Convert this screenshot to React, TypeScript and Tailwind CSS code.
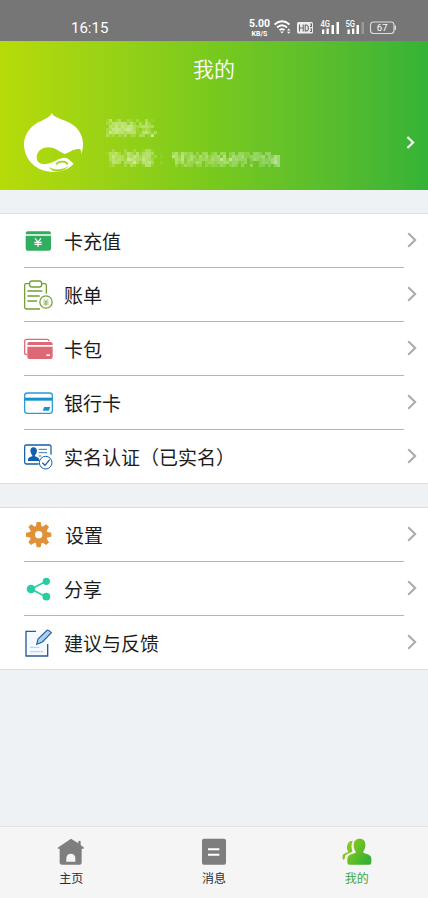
import React from "react";

const FONT = "font-['Noto_Sans_CJK_SC',sans-serif]";

/* Censored lines: each digit is the relative opacity of one 3px block. */
const NAME_MASK = [
  "14013002102003010",
  "22444441420304200",
  "04353545532344330",
  "23555456531023200",
  "25454434441145313",
  "31202130220330160",
];
const CARD_MASK = [
  "0020002002001331000000000000000000000000000000000000000000",
  "1334202431413443000000341432302033023033023033220332033000",
  "0353331435424441201000542522431424233415024334223333413254",
  "0343432654335432000000143513422333243364263433302432323454",
  "0144303336314453001000042413224302332334423312301002332464",
  "0120002032001441000000020132202202122132023203003002202034",
];

function Mosaic({ rows }: { rows: string[] }) {
  return (
    <svg width={rows[0].length * 3} height={18} shapeRendering="crispEdges" className="block">
      {rows.flatMap((row, y) =>
        [...row].map((v, x) =>
          v === "0" ? null : (
            <rect key={`${x}-${y}`} x={x * 3} y={y * 3} width={3} height={3} fill="#fff" fillOpacity={Number(v) / 11} />
          )
        )
      )}
    </svg>
  );
}

function Chevron({ className }: { className: string }) {
  return (
    <svg viewBox="0 0 10 16" fill="none" stroke="currentColor" strokeWidth="2" className={className}>
      <path d="M1.2 1.2 8.2 8 1.2 14.8" />
    </svg>
  );
}

function StatusBar() {
  return (
    <div className="flex h-[41px] items-start bg-[#767676] text-white">
      <span className="ml-[71px] mt-[17px] w-[178px] font-['Roboto',sans-serif] text-[15px] leading-[22px]">16:15</span>
      <div className="mt-[18px] w-[21px] text-center font-['Roboto',sans-serif] font-bold">
        <div className="text-[10.5px] leading-[12px]">5.00</div>
        <div className="text-[7px] leading-[8px]">KB/S</div>
      </div>
      <svg width="150" height="16" viewBox="0 0 150 16" className="ml-[4px] mt-[20px]" fill="none" stroke="#fff">
        <path d="M0.5 4.5Q8-2 15.5 4.5M3 7.5Q8 3 13 7.5M5.5 10.2Q8 8 10.5 10.2" strokeWidth="1.7" />
        <path d="M6.2 11.4h3.6L8 13.6zM13 10.5l1.7-2 1.7 2zM13 11.7l1.7 2 1.7-2z" fill="#fff" stroke="none" />
        <rect x="23" y="2" width="16" height="11.5" rx="1.5" fill="#eee" stroke="none" />
        <path d="M25.5 4.5v7M29.2 4.5v7M25.5 8h3.7M31.2 5v6h1.2q2-.4 2-3t-2-3zM36 4h1.5v2.4H36M36 9h1.5v2.5H36" stroke="#686868" strokeWidth="1.1" />
        <g fill="#fff" stroke="none">
          <path d="M48 9.5h2.3v4.5h-2.3zM52.5 8.5h2.3V14h-2.3zM57.5 5h2.5v9h-2.5zM62.5 2h2.5v12h-2.5zM73.5 9.5h2.3v4.5h-2.3zM78 8.5h2.3V14H78zM82.5 5H85v9h-2.5z" />
          <path d="M87.5 2H90v12h-2.5z" opacity=".25" />
        </g>
        <g fill="#fff" stroke="none" className="font-['Roboto',sans-serif] font-medium">
          <text x="46.5" y="7" fontSize="9" textLength="9.5" lengthAdjust="spacingAndGlyphs">4G</text>
          <text x="71.5" y="7" fontSize="9" textLength="9.5" lengthAdjust="spacingAndGlyphs">5G</text>
        </g>
        <rect x="96.5" y="2" width="23.5" height="11.5" rx="3" strokeWidth="1.1" stroke="#ddd" />
        <path d="M121.3 5.5v4.5" stroke="#ddd" strokeWidth="1.4" />
        <text x="108.2" y="11.2" textAnchor="middle" fontSize="9.5" fill="#fff" stroke="none" className="font-['Roboto',sans-serif] font-normal">67</text>
      </svg>
    </div>
  );
}

function Avatar() {
  return (
    <svg width="59" height="59" viewBox="72 54 177 177" className="ml-[24px] mt-[18px] shrink-0">
      <path
        fill="#fff"
        d="M155 54C161 68 185 71 210 84C236 98 249 122 249 148C249 160 247 171 243 180C245 171 244 163 238 162C224 160 210 171 194 177C178 171 166 157 145 157C124 157 110 171 110 188C110 202 122 208 138 207C160 205 176 188 193 188C204 187 211 198 221 206C205 223 183 231 160 231C110 231 72 195 72 148C72 121 88 97 115 82C135 72 151 66 155 54Z"
      />
      <path d="M169 209C174 198 198 196 203 208" fill="none" stroke="#a2d414" strokeWidth="5" />
      <path d="M149 218C162 227 187 226 202 216C187 232 158 233 149 218Z" fill="#a4d513" stroke="#a4d513" strokeWidth="2" />
    </svg>
  );
}

function RechargeIcon() {
  return (
    <svg width="29" height="28" viewBox="72 51 87 84">
      <path d="M77 71Q77 64 83 64H147Q153 64 153 71V73H77ZM77 77H153V116Q153 122 147 122H83Q77 122 77 116Z" fill="#31ad60" />
      <path d="M105 85 114 96 123 85M103 97H125M103 103H125M114 96V111" fill="none" stroke="#fff" strokeWidth="3.5" />
    </svg>
  );
}

function BillIcon() {
  return (
    <svg width="29" height="30" viewBox="71 209 87 90" fill="none" stroke="#71a032" strokeWidth="3.8">
      <path d="M86 220H76Q73 220 73 225V291Q73 296 77 296H119M124 220H133Q138 220 138 226V250" />
      <rect x="88" y="212" width="36" height="18" rx="7" />
      <path d="M81 242H126M81 257H118M81 272H110" />
      <circle cx="137" cy="275" r="18.5" />
      <path d="M130 266 137 274 144 266M129 275H145M129 281H145M137 274V287" strokeWidth="2.4" />
    </svg>
  );
}

function WalletIcon() {
  return (
    <svg width="29" height="22" viewBox="71 23 87 66">
      <path d="M80 73Q73 73 73 67V33Q73 27 79 27H140Q146 27 146 33" fill="none" stroke="#df6876" strokeWidth="3.8" />
      <path d="M81 44V41Q81 35 87 35H151Q157 35 157 41V44ZM81 49H157V80Q157 86 151 86H87Q81 86 81 80Z" fill="#df6876" />
      <rect x="138" y="72" width="11" height="5" fill="#fff" />
    </svg>
  );
}

function BankCardIcon() {
  return (
    <svg width="29" height="22" viewBox="71 184 87 66">
      <rect x="73" y="187" width="83" height="61" rx="8" fill="#fff" stroke="#2a9bd3" strokeWidth="3.8" />
      <path d="M73 201H156V210H73Z" fill="#1593d0" />
      <path d="M132 229H150L145 240H127Z" fill="#1593d0" />
    </svg>
  );
}

function IdentityIcon() {
  return (
    <svg width="29" height="26" viewBox="71 340 87 78" fill="none" stroke="#175fa9" strokeWidth="3.8">
      <path d="M115 400H78Q73 400 73 395V348Q73 343 78 343H147Q152 343 152 348V372" />
      <path d="M100 350C91 350 89 357 91 365Q93 372 96 374V377Q84 380 83 386V391H117V386Q115 380 104 377V374Q110 367 110 360Q109 351 100 350Z" fill="#1260ad" stroke="none" />
      <path d="M115 356H140M115 366H140M115 376H123" strokeWidth="3" stroke="#3e78b5" />
      <circle cx="136" cy="396" r="19" fill="#fff" strokeWidth="3" />
      <path d="M126 396 134 404 148 387" strokeWidth="4" />
    </svg>
  );
}

function SettingsIcon() {
  return (
    <svg width="26" height="26" viewBox="-38 -38 78 78">
      <g fill="#e1913a">
        <circle r="27" />
        {[0, 45, 90, 135, 180, 225, 270, 315].map((a) => (
          <path key={a} d="M-9-22-6-38H6L9-22Z" transform={`rotate(${a})`} />
        ))}
      </g>
      <circle r="11" fill="#fff" />
    </svg>
  );
}

function ShareIcon() {
  return (
    <svg width="25" height="24" viewBox="76 228 75 72">
      <path d="M137 241 91 264 137 288" fill="none" stroke="#28cfa4" strokeWidth="5" />
      <g fill="#25cda2">
        <circle cx="91" cy="264" r="13" />
        <circle cx="137" cy="241" r="11" />
        <circle cx="137" cy="287" r="11.5" />
      </g>
    </svg>
  );
}

function FeedbackIcon() {
  return (
    <svg width="28" height="28" viewBox="75 385 84 84" fill="none">
      <path d="M78 392H120L145 425V466H78Z" fill="#f4faff" />
      <path d="M108 392H78V466H143V430" stroke="#2e5993" strokeWidth="4" />
      <path d="M110 431 114 415 142 388Q146 387 154 396L127 424Z" fill="#a6d5f3" stroke="#325c91" strokeWidth="3.5" />
      <path d="M90 440H118M90 453H130" stroke="#b5dced" strokeWidth="3.5" />
    </svg>
  );
}

function HomeIcon() {
  return (
    <svg width="28" height="28" viewBox="172 67 84 84">
      <path
        fill="#7e7e7e"
        d="M214 69 236 83V77Q239 73 243 77V88L253 96Q252 101 246 99V141Q246 147 240 147H187Q180 147 180 141V99Q174 101 174 96Z"
      />
      <path d="M200 138V126Q202 114 214 114Q225 114 227 126V138Z" fill="#f5f5f5" />
    </svg>
  );
}

function MessageIcon() {
  return (
    <svg width="28" height="28" viewBox="600 67 84 84">
      <rect x="606" y="69" width="72" height="78" rx="6" fill="#7e7e7e" />
      <path d="M624 101H658M624 117H658" stroke="#fff" strokeWidth="6" />
    </svg>
  );
}

function ProfileIcon() {
  return (
    <svg width="30" height="28" viewBox="125 67 90 84">
      <defs>
        <linearGradient id="profile" x1="0" x2="1" y1="0" y2="0.6">
          <stop stopColor="#a9cf13" />
          <stop offset="1" stopColor="#36b334" />
        </linearGradient>
      </defs>
      <path
        fill="url(#profile)"
        d="M178 69C190 69 196 77 195 88C195 99 191 105 188 109C192 117 213 113 213 129V141Q213 147 207 147H147Q141 147 141 141V129C142 113 163 117 167 109C163 104 160 98 160 88C160 77 166 69 178 69ZM157 77C152 86 153 98 156 106C154 112 146 110 136 118C132 121 135 132 130 132C126 132 126 122 127 119C130 112 142 112 144 107C139 102 139 93 141 87C144 79 151 74 157 77Z"
      />
    </svg>
  );
}

type Item = { label: string; Icon: React.ComponentType; shift?: string };

const ACCOUNT: Item[] = [
  { label: "卡充值", Icon: RechargeIcon },
  { label: "账单", Icon: BillIcon },
  { label: "卡包", Icon: WalletIcon },
  { label: "银行卡", Icon: BankCardIcon },
  { label: "实名认证（已实名）", Icon: IdentityIcon },
];
const GENERAL: Item[] = [
  { label: "设置", Icon: SettingsIcon, shift: "pl-px" },
  { label: "分享", Icon: ShareIcon },
  { label: "建议与反馈", Icon: FeedbackIcon },
];

function Menu({ items }: { items: Item[] }) {
  return (
    <ul className="border-y border-[#dcdfe1] bg-white">
      {items.map(({ label, Icon, shift }, i) => (
        <li key={label} className="pl-[24px]">
          <div className="flex h-[53px] items-center pr-[11px]">
            <span className="flex w-[29px] shrink-0 justify-center">
              <Icon />
            </span>
            <span className={`ml-[11px] flex-1 text-[19px] font-normal leading-[28px] text-[#1c1c1c] ${shift ?? ""}`}>
              {label}
            </span>
            <Chevron className="mb-px h-[16px] w-[10px] text-[#aaa]" />
          </div>
          {i < items.length - 1 && <div className="mr-[24px] h-px bg-[#9fc3a8]" />}
        </li>
      ))}
    </ul>
  );
}

const TABS = [
  { label: "主页", Icon: HomeIcon, color: "text-[#2c2c38]" },
  { label: "消息", Icon: MessageIcon, color: "text-[#2c2c38]" },
  { label: "我的", Icon: ProfileIcon, color: "text-[#3aa648]" },
];

export default function App() {
  return (
    <div className={`flex h-[898px] w-[428px] flex-col overflow-hidden bg-[#eef2f5] ${FONT}`}>
      <StatusBar />
      <header className="h-[149px] shrink-0 bg-linear-to-r from-[#b7db08] via-[#78c91d] to-[#34b336] text-white">
        <h1 className="pt-[12px] text-center text-[21px] font-[350] leading-[30px]">我的</h1>
        <div className="-mt-[8px] flex h-[100px] items-start pt-[20px]">
          <Avatar />
          <div className="ml-[23px] mt-[24px] flex flex-1 flex-col gap-[12px]">
            <Mosaic rows={NAME_MASK} />
            <Mosaic rows={CARD_MASK} />
          </div>
          <Chevron className="mr-[13px] mt-[41px] h-[13px] w-[9px] stroke-[2.6px]" />
        </div>
      </header>
      <main className="flex flex-1 flex-col gap-[23px] pt-[23px]">
        <Menu items={ACCOUNT} />
        <Menu items={GENERAL} />
      </main>
      <nav className="flex h-[72px] shrink-0 border-t border-[#e2e4e4] bg-[#f5f5f5]">
        {TABS.map(({ label, Icon, color }) => (
          <div key={label} className="flex flex-1 flex-col items-center pt-[11px]">
            <Icon />
            <span className={`mt-[3px] text-[12px] leading-[18px] ${color}`}>{label}</span>
          </div>
        ))}
      </nav>
    </div>
  );
}
